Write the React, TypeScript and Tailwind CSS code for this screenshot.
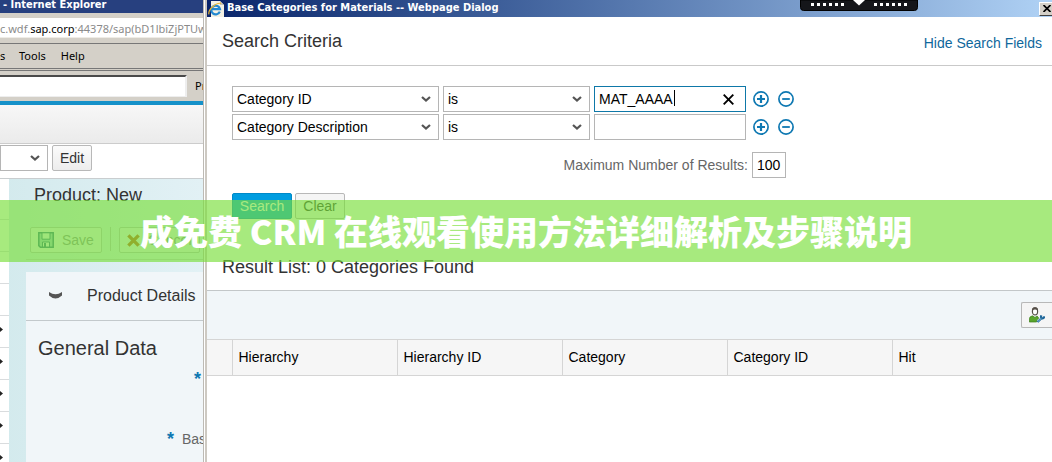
import type { ReactNode } from "react";

interface SelectProps {
   label: string;
   value: string;
   className: string;
}

interface CriteriaProps {
   field: string;
   value: string;
   active?: boolean;
}

const columns = ["Hierarchy", "Hierarchy ID", "Category", "Category ID"];
const navRows = [false, false, false, false, true, true, true, true, true];

function Chevron() {
   return (
      <svg
         className="pointer-events-none absolute right-2 top-1/2 h-2 w-[10px] -translate-y-1/2"
         viewBox="0 0 10 8"
         fill="none"
         stroke="#555"
         strokeWidth="2.2"
      >
         <path d="M1 2l4 3.6L9 2" />
      </svg>
   );
}

function Select({ label, value, className }: SelectProps) {
   return (
      <div className={`relative shrink-0 ${className}`}>
         <select
            aria-label={label}
            className="block h-[26px] w-full appearance-none border border-[#b5b5b5] bg-white pl-1 text-sm text-black"
         >
            <option>{value}</option>
         </select>
         <Chevron />
      </div>
   );
}

function RoundButton({ label, plus }: { label: string; plus?: boolean }) {
   return (
      <button type="button" aria-label={label} className="shrink-0">
         <svg
            className="h-4 w-4"
            viewBox="0 0 16 16"
            fill="none"
            stroke="#0e78b2"
         >
            <circle cx="8" cy="8" r="7.1" strokeWidth="1.7" />
            <path
               d={plus ? "M4 8h8M8 4v8" : "M4.2 8h7.6"}
               strokeWidth={plus ? 2.2 : 1.8}
            />
         </svg>
      </button>
   );
}

function CriteriaRow({ field, value, active }: CriteriaProps) {
   return (
      <div className="flex items-center">
         <Select label="Search field" value={field} className="w-[207px]" />
         <Select label="Operator" value="is" className="ml-1 w-[147px]" />
         <div className="relative ml-1 w-[152px] shrink-0">
            <input
               type="text"
               aria-label={field}
               defaultValue={value}
               className={`block h-[26px] w-full border bg-white px-1 text-sm text-black ${
                  active ? "border-[#0e78a8]" : "border-[#b5b5b5]"
               }`}
            />
            {active && (
               <>
                  <span className="absolute left-20 top-1 h-4 w-px bg-black" />
                  <button
                     type="button"
                     aria-label="Clear value"
                     className="absolute right-3 top-2"
                  >
                     <svg
                        className="h-[11px] w-[11px]"
                        viewBox="0 0 11 11"
                        stroke="#000"
                        strokeWidth="1.9"
                     >
                        <path d="M.7.7l9.6 9.6M10.3.7L.7 10.3" />
                     </svg>
                  </button>
               </>
            )}
         </div>
         <div className="ml-[7px] flex gap-[9px]">
            <RoundButton label="Add line" plus />
            <RoundButton label="Remove line" />
         </div>
      </div>
   );
}

function ToolButton({ icon, children }: { icon: ReactNode; children: ReactNode }) {
   return (
      <button
         type="button"
         className="flex h-[26px] shrink-0 items-center gap-2 rounded-xs border border-[#b8bfc2] bg-[#ebf1f2] px-[7px] text-sm text-[#8b9094]"
      >
         {icon}
         {children}
      </button>
   );
}

function BrowserWindow() {
   return (
      <aside className="flex w-[203px] shrink-0 flex-col overflow-hidden whitespace-nowrap bg-[#d4d0c8]">
         <div className="h-[13px] shrink-0 bg-[#27407f] pl-[3px] font-['DejaVu_Sans_Condensed','DejaVu_Sans',sans-serif] text-[11px] font-bold leading-[9px] text-white">
            - Internet Explorer
         </div>
         <div className="mt-[5px] h-5 shrink-0 border-b border-[#efece6] bg-white font-['Noto_Sans',sans-serif] text-[11px] leading-[22px] text-[#8a8a8a]">
            c.wdf.<span className="text-black">sap.corp</span>
            :44378/sap(bD1lbiZjPTUwN
         </div>
         <nav className="mt-[5px] flex h-[25px] shrink-0 items-center gap-[15px] border-t border-[#777] font-['Noto_Sans',sans-serif] text-[11px] text-black">
            <span className="w-1">s</span>
            <a href="#tools">Tools</a>
            <a href="#help">Help</a>
         </nav>
         <div className="flex h-[33px] shrink-0 items-center gap-2 border-t-3 border-double border-[#777] font-['Noto_Sans',sans-serif] text-[11px] text-black">
            <input
               type="text"
               aria-label="Toolbar address"
               className="h-[22px] w-[187px] shrink-0 border-b border-r-2 border-t-2 border-b-[#eee] border-r-[#eee] border-t-[#4a4a4a] bg-white"
            />
            <span>Pr</span>
         </div>
         <div className="h-[43px] shrink-0 border-b border-t-4 border-b-[#ccc] border-t-[#1591c9] bg-linear-to-b from-[#f7f7f7] to-[#ebebeb]" />
         <div className="flex h-[35px] shrink-0 items-start gap-1 border-b border-[#c9cdcf] bg-white pt-px">
            <Select label="View" value="" className="w-12" />
            <button
               type="button"
               className="h-[26px] w-10 rounded-xs border border-[#b8b8b8] bg-linear-to-b from-[#fbfbfb] to-[#ededed] text-sm text-[#333]"
            >
               Edit
            </button>
         </div>
         <div className="flex min-h-0 flex-1 bg-linear-to-r from-[#d3eaed] to-[#e2f1f5]">
            <ul className="w-[9px] shrink-0 bg-white pt-[9px]">
               {navRows.map((arrow, i) => (
                  <li
                     key={i}
                     className="flex h-8 items-center border-b border-[#d9dcde] pb-1"
                  >
                     {arrow && (
                        <svg className="h-[5px] w-[3px]" viewBox="0 0 3 5">
                           <path d="M0 0l3 2.5L0 5z" fill="#222" />
                        </svg>
                     )}
                  </li>
               ))}
            </ul>
            <div className="flex min-w-0 flex-1 flex-col pl-[17px]">
               <h1 className="pl-2 pt-1 text-lg leading-6 text-[#333]">
                  Product: New
               </h1>
               <div className="mt-5 flex gap-2 border-b border-[#c3ced1] pb-[6px] pl-1">
                  <ToolButton
                     icon={
                        <svg className="h-4 w-4" viewBox="0 0 16 16" fill="none">
                           <path
                              d="M.8.8h14.4v14.4H2.4L.8 13.6z"
                              fill="#9cc9cf"
                              stroke="#2e7187"
                              strokeWidth="1.5"
                           />
                           <path
                              d="M4 .8h8v6.4H4zM4.5 10h7v5h-7z"
                              fill="#e5f3f3"
                              stroke="#2e7187"
                           />
                           <path d="M6 11h2v4H6z" fill="#2e7187" />
                        </svg>
                     }
                  >
                     Save
                  </ToolButton>
                  <span className="h-6 w-px shrink-0 bg-[#b8bfc2]" />
                  <ToolButton
                     icon={
                        <svg
                           className="h-[13px] w-[13px]"
                           viewBox="0 0 13 13"
                           stroke="#bd5717"
                           strokeWidth="3.4"
                        >
                           <path d="M1.4 1.4l10.2 10.2M11.6 1.4L1.4 11.6" />
                        </svg>
                     }
                  >
                     Cancel
                  </ToolButton>
               </div>
               <section className="mt-3 flex-1 bg-[#f1f6f9]">
                  <h2 className="flex h-[49px] items-center border-b border-[#c3c9cc] pl-[23px] text-base text-[#333]">
                     <svg className="mr-[25px] h-2 w-[13px]" viewBox="0 0 13 8">
                        <path
                           d="M0 0q6.500 4.500 13 0v3.500Q6.500 9.500 0 3.500z"
                           fill="#555"
                        />
                     </svg>
                     Product Details
                  </h2>
                  <h3 className="pl-3 pt-3 text-xl leading-[30px] text-[#333]">
                     General Data
                  </h3>
                  <p className="mt-1 pr-[2px] text-right text-lg font-bold leading-6 text-[#0e78b2]">
                     *
                  </p>
                  <p className="mt-9 flex overflow-hidden pl-[141px] leading-6">
                     <span className="w-[15px] shrink-0 text-lg font-bold leading-6 text-[#0e78b2]">
                        *
                     </span>
                     <span className="text-sm leading-6 text-[#666]">
                        Base
                     </span>
                  </p>
               </section>
            </div>
         </div>
      </aside>
   );
}

function TitleBar() {
   return (
      <header className="relative flex h-[17px] items-center justify-between overflow-hidden bg-linear-to-r from-[#0a246a] to-[#b0d2f5]">
         <div className="flex items-center gap-[3px] pl-px font-['DejaVu_Sans_Condensed','DejaVu_Sans',sans-serif] text-[11px] font-bold text-white">
            <svg className="h-4 w-4" viewBox="0 0 16 16" fill="none">
               <path d="M3 0h9l4 4v12H3z" fill="#f4f1e4" />
               <path d="M12 0v4h4z" fill="#c9c5b5" />
               <path
                  d="M11.8 10.6A4.4 4.4 0 1 1 12 8.2H4"
                  stroke="#2389d2"
                  strokeWidth="2.2"
               />
               <path
                  d="M1 13.4C-.4 9 8 1.2 13 2.4"
                  stroke="#eab530"
                  strokeWidth="1.2"
               />
            </svg>
            Base Categories for Materials -- Webpage Dialog
         </div>
         <svg
            className="absolute right-[134px] top-0 h-[11px] w-[118px]"
            viewBox="0 0 118 11"
         >
            <path
               d="M.5 0v7.500a3 3 0 0 0 3 3h111a3 3 0 0 0 3-3V0z"
               fill="#15161a"
               stroke="#000"
            />
            <path
               d="M11 4.500h34M74 4.500h34"
               stroke="#fff"
               strokeWidth="3"
               strokeDasharray="3 3"
            />
            <path d="M53 0h12l-6 5.500z" fill="#fff" />
         </svg>
         <button
            type="button"
            aria-label="Close"
            className="-mr-[3px] flex h-[14px] w-4 items-center justify-center border border-b-[#404040] border-l-white border-r-[#404040] border-t-white bg-[#d4d0c8]"
         >
            <svg
               className="h-[7px] w-2"
               viewBox="0 0 8 7"
               stroke="#000"
               strokeWidth="1.7"
            >
               <path d="M.5 0l7 7M7.5 0l-7 7" />
            </svg>
         </button>
      </header>
   );
}

function Dialog() {
   return (
      <main className="min-w-0 flex-1 bg-white">
         <TitleBar />
         <div className="flex h-[49px] items-center justify-between border-b border-[#c9c9c9] pl-[15px] pr-[10px]">
            <h2 className="text-lg text-[#333]">Search Criteria</h2>
            <a href="#hide" className="pt-1 text-sm text-[#0f679c]">
               Hide Search Fields
            </a>
         </div>
         <form className="pl-[25px] pt-5">
            <div className="flex flex-col gap-[2px]">
               <CriteriaRow field="Category ID" value="MAT_AAAA" active />
               <CriteriaRow field="Category Description" value="" />
            </div>
            <div className="mt-3 flex w-[554px] items-center justify-end gap-1">
               <label htmlFor="max" className="text-sm text-[#666]">
                  Maximum Number of Results:
               </label>
               <input
                  id="max"
                  type="text"
                  defaultValue="100"
                  className="h-[26px] w-[34px] border border-[#b5b5b5] px-1 text-sm text-black"
               />
            </div>
            <div className="mt-[15px] flex gap-[3px]">
               <button
                  type="button"
                  className="h-[26px] w-[60px] rounded-xs border border-[#0089c8] bg-[#009de0] text-sm text-white"
               >
                  Search
               </button>
               <button
                  type="button"
                  className="h-[26px] w-[50px] rounded-xs border border-[#b8b8b8] bg-[#f5f5f5] text-sm text-[#333]"
               >
                  Clear
               </button>
            </div>
         </form>
         <h2 className="mt-9 pl-[15px] text-lg leading-6 text-[#333]">
            Result List: 0 Categories Found
         </h2>
         <div className="mt-[11px] flex h-[49px] items-center justify-end border-t border-[#c3c7c9] bg-[#f1f6f9]">
            <button
               type="button"
               aria-label="Personalize"
               className="flex h-[26px] w-[31px] items-center justify-center rounded-l-xs border border-r-0 border-[#b8b8b8] bg-[#f5f5f5]"
            >
               <svg className="h-4 w-4" viewBox="0 0 16 16" fill="none">
                  <path
                     d="M.3 15v-3.4Q.5 9.600 3.500 8.800L6 10.500l2-1.500q1.400.8 1.600 2.400L7.600 13v2z"
                     fill="#59a52c"
                     stroke="#397c1a"
                     strokeWidth=".7"
                  />
                  <ellipse
                     cx="6"
                     cy="4.4"
                     rx="2.6"
                     ry="3.5"
                     fill="#fff"
                     stroke="#554f48"
                     strokeWidth="1.2"
                  />
                  <path d="M3 3.600Q3 .2 6 .2t3 3.400Q6 1.600 3 3.600z" fill="#554f48" />
                  <path
                     d="M8.500 15l4-3.800M12.400 8.400q-1 2.400.6 3 1.700.5 2.600-2"
                     stroke="#1f6699"
                     strokeWidth="2.2"
                  />
                  <path
                     d="M8.900 14.600l3.400-3.200"
                     stroke="#8ac4e6"
                     strokeWidth=".9"
                  />
               </svg>
            </button>
         </div>
         <table className="w-full table-fixed border-collapse text-left text-sm text-black">
            <thead>
               <tr className="h-9 border-y border-[#d5d5d5] bg-[#f6f6f6]">
                  <th className="w-[25px] border-r border-[#d5d5d5]" />
                  {columns.map((name) => (
                     <th
                        key={name}
                        className="w-[165px] border-r border-[#d5d5d5] pl-[6px] pb-[2px] font-normal"
                     >
                        {name}
                     </th>
                  ))}
                  <th className="pl-[6px] pb-[2px] font-normal">Hit</th>
               </tr>
            </thead>
         </table>
      </main>
   );
}

export default function App() {
   return (
      <div className="relative flex h-screen overflow-hidden font-['Liberation_Sans',Arial,sans-serif]">
         <BrowserWindow />
         <div className="w-1 shrink-0 border-l border-r-2 border-l-[#bdbab4] border-r-[#cdc9c2] bg-white" />
         <Dialog />
         <div className="absolute inset-x-0 top-[200px] flex h-[62px] items-center justify-center whitespace-nowrap bg-[#78df39]/65 font-['Noto_Sans_CJK_SC',sans-serif] text-[34px] font-black leading-none text-white">
            成免费 CRM 在线观看使用方法详细解析及步骤说明
         </div>
      </div>
   );
}
